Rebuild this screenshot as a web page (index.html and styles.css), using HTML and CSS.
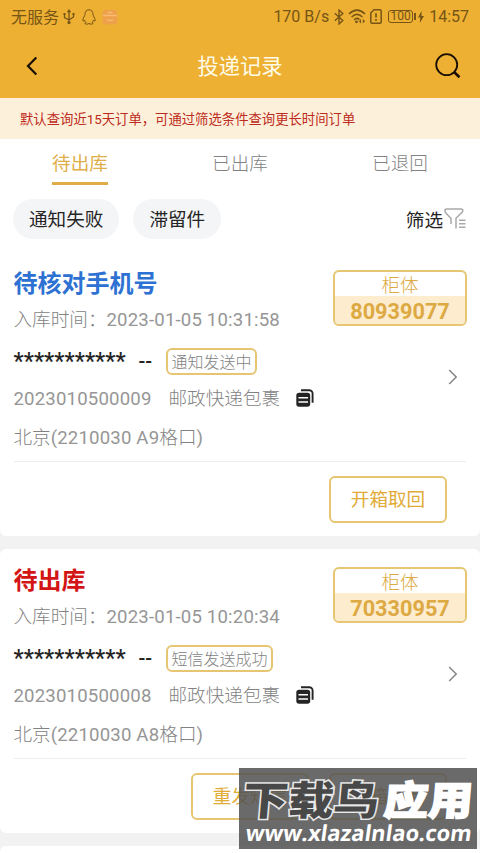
FILE: index.html
```html
<!DOCTYPE html>
<html lang="zh-CN">
<head>
<meta charset="utf-8">
<title>投递记录</title>
<link rel="stylesheet" href="styles.css">
</head>
<body>
<svg width="0" height="0" class="defs">
  <symbol id="copy" viewBox="0 0 18 18">
    <path d="M5 1.2h8.2a3.4 3.4 0 0 1 3.4 3.4v9.2" fill="none" stroke="#252525" stroke-width="1.9"/>
    <rect x="0.3" y="3.8" width="13.9" height="14" rx="2.8" fill="#252525"/>
    <path d="M2.500 8.700h9.500M2.500 13h9.500" stroke="#fff" stroke-width="1.600"/>
  </symbol>
  <symbol id="arrow" viewBox="0 0 10 16">
    <path d="M1.200 1l7 7-7 7" fill="none" stroke="#858585" stroke-width="1.500"/>
  </symbol>
</svg>
<div class="app">
  <header class="header">
    <div class="status">
      <div class="status-left">
        <span>无服务</span>
        <svg class="usb" width="12" height="16" viewBox="0 0 12 16" fill="none" stroke="#765516" stroke-width="1.300"><path d="M6 2v11M1.500 5v3.500L6 11l4.500-3V5"/><path d="M6 0l2.200 3.200H3.800zM0.500 4h2v2h-2zM9.500 4h2v2h-2z" fill="#765516" stroke="none"/><circle cx="6" cy="13.600" r="1.600" fill="#765516" stroke="none"/></svg>
        <svg class="qq" width="14" height="16" viewBox="0 0 14 16" fill="none" stroke="#765516" stroke-width="1"><path d="M7 .8C4.300.8 3 2.700 3 5.200c0 1.700-2.200 3.900-2.200 6.200 0 1.200.8.900 1.700-.3.300 1 .9 1.900 1.600 2.400-1.700.4-1.400 1.700.4 1.700 1.200 0 2-.3 2.500-.8.500.5 1.300.8 2.500.8 1.800 0 2.100-1.300.4-1.700.7-.5 1.300-1.400 1.600-2.400.9 1.200 1.700 1.500 1.700.3C13.200 9.100 11 6.900 11 5.200 11 2.700 9.700.8 7 .8z"/></svg>
        <svg class="box" width="16" height="16" viewBox="0 0 16 16"><rect x=".5" y="1" width="15" height="14.500" rx="3.500" fill="#efa04a"/><path d="M1 6.500h14M5.500 3.500h5M5 10.500q3 2.200 6 0" stroke="#f5bd72" fill="none" stroke-width="1.300"/></svg>
      </div>
      <div class="status-right">
        <span>170 B/s</span>
        <svg class="bt" width="10" height="16" viewBox="0 0 10 16" fill="none" stroke="#765516" stroke-width="1.400"><path d="M.8 4.200l8 7.400L5 15V1l3.800 3.400-8 7.400"/></svg>
        <svg class="wifi" width="18" height="15" viewBox="0 0 18 15" fill="none" stroke="#765516" stroke-width="1.600"><path d="M1 5Q9-2.800 17 5M3.600 8Q9 2.800 14.400 8M6.200 10.800Q9 8.200 11.400 10.600"/><circle cx="8.500" cy="12.800" r="1.400" fill="#765516" stroke="none"/><path d="M13 9.800v4.800l-2-2zM14.800 9.800v4.800l2.200-2.400z" fill="#765516" stroke="none"/></svg>
        <svg class="sim" width="12" height="15" viewBox="0 0 12 15" fill="none" stroke="#765516" stroke-width="1.500"><path d="M4 .8h6q1.200 0 1.200 1.200v11q0 1.200-1.200 1.200H2Q.8 14.200.8 13V4z"/><path d="M6 4.200v4.200M6 10v1.700" stroke-width="1.700"/></svg>
        <span class="battery">100</span>
        <svg class="bolt" width="6" height="12" viewBox="0 0 6 12"><path d="M3.500 0L0 6.500h2.300L1.800 12 6 5H3.600z" fill="#765516"/></svg>
        <span>14:57</span>
      </div>
    </div>
    <div class="nav">
      <svg width="12" height="20" viewBox="0 0 12 20"><path d="M10.300 1.500L2 10l8.300 8.500" fill="none" stroke="#180f02" stroke-width="2.200"/></svg>
      <h1>投递记录</h1>
      <svg width="26" height="26" viewBox="0 0 26 26" fill="none" stroke="#180f02"><circle cx="11.700" cy="11.700" r="10.500" stroke-width="1.800"/><path d="M18.800 18.800l5.700 5.500" stroke-width="2.600"/></svg>
    </div>
  </header>
  <div class="notice">默认查询近15天订单，可通过筛选条件查询更长时间订单</div>
  <nav class="tabs">
    <span class="tab active">待出库</span><span class="tab">已出库</span><span class="tab">已退回</span>
  </nav>
  <div class="filters">
    <span class="chip">通知失败</span><span class="chip">滞留件</span>
    <span class="filter">筛选</span>
    <svg width="22" height="21" viewBox="0 0 22 21" fill="none" stroke="#a9a9a9" stroke-width="1.500"><path d="M7 16v-5.500L1.500 4.500Q-.2 1.200 2.500 1h14.800q2.500.3 1 3L12 10.300V20.500M15 12.200h6.500M15 15.800h6.500M15 19.300h6.500"/></svg>
  </div>

  <main class="list">
    <section class="card first">
      <div class="cabinet"><span>柜体</span><b>80939077</b></div>
      <h2 class="blue">待核对手机号</h2>
      <p class="date">入库时间：<span class="latin">2023-01-05 10:31:58</span></p>
      <div class="phone"><b class="stars">***********</b><b class="dash">--</b><span class="tag">通知发送中</span></div>
      <div class="parcel"><span class="number latin">2023010500009</span><span class="carrier">邮政快递包裹</span><svg width="18" height="18"><use href="#copy"/></svg></div>
      <p class="address">北京<span class="latin">(2210030 A9</span>格口<span class="latin">)</span></p>
      <svg class="arrow" width="10" height="16"><use href="#arrow"/></svg>
      <div class="actions"><button>开箱取回</button></div>
    </section>
    <section class="card">
      <div class="cabinet"><span>柜体</span><b>70330957</b></div>
      <h2 class="red">待出库</h2>
      <p class="date">入库时间：<span class="latin">2023-01-05 10:20:34</span></p>
      <div class="phone"><b class="stars">***********</b><b class="dash">--</b><span class="tag">短信发送成功</span></div>
      <div class="parcel"><span class="number latin">2023010500008</span><span class="carrier">邮政快递包裹</span><svg width="18" height="18"><use href="#copy"/></svg></div>
      <p class="address">北京<span class="latin">(2210030 A8</span>格口<span class="latin">)</span></p>
      <svg class="arrow" width="10" height="16"><use href="#arrow"/></svg>
      <div class="actions"><button>重发短信</button><button>开箱取回</button></div>
    </section>
    <section class="card"></section>
  </main>

  <svg class="watermark" width="238" height="81" viewBox="0 0 238 81">
    <g class="brand" transform="skewX(-5)">
      <text class="dark" x="7" y="47.500" textLength="136" lengthAdjust="spacingAndGlyphs">下载鸟</text>
      <text class="light" x="148" y="47.500" textLength="89" lengthAdjust="spacingAndGlyphs">应用</text>
    </g>
    <g transform="skewX(-8)"><text class="url" x="16" y="73" textLength="226" lengthAdjust="spacingAndGlyphs">www.xlazalnlao.com</text></g>
  </svg>
</div>
</body>
</html>
```
FILE: styles.css
```css
* { box-sizing: border-box; }
body { margin: 0; }
.defs { position: absolute; }
h1, h2, p { margin: 0; }
svg { display: block; flex: none; }
.app {
  position: relative;
  width: 480px;
  height: 853px;
  overflow: hidden;
  background: #fff;
  color: #828282;
  font-family: Roboto, "Noto Sans CJK SC", sans-serif;
  font-size: 18.6px;
  font-weight: 300;
  white-space: nowrap;
}
.latin { color: #969696; font-weight: 400; letter-spacing: .17px; }
.header { height: 98px; background: #edb033; }
.status {
  display: flex;
  justify-content: space-between;
  height: 33px;
  padding: 0 11px;
  color: #765516;
  font-size: 16px;
  font-weight: 400;
}
.status-left, .status-right { display: flex; align-items: center; }
.status-left span { margin-top: -1px; }
.usb { margin-left: 4px; }
.qq { margin-left: 7px; }
.box { margin-left: 6px; }
.bt { margin-left: 5px; }
.wifi { margin-left: 4px; }
.sim { margin-left: 4px; }
.battery {
  position: relative;
  width: 25px;
  height: 13px;
  margin-left: 6px;
  border: 1px solid #765516;
  border-radius: 3px;
  font-size: 12px;
  line-height: 11.5px;
  text-align: center;
}
.battery::after {
  content: "";
  position: absolute;
  left: 25px;
  top: 2px;
  width: 1.5px;
  height: 7px;
  background: #765516;
}
.bolt { margin: 0 5px 0 5px; }
.nav {
  display: flex;
  align-items: center;
  justify-content: space-between;
  height: 65px;
  padding: 0 19px 0 26px;
}
.nav h1 { margin-top: -2px; margin-left: 7px; color: #fffbe6; font-size: 21.3px; font-weight: 400; }
.notice {
  height: 41px;
  padding-left: 20px;
  background: #fdf0da;
  color: #bd2a20;
  font-size: 13.35px;
  font-weight: 400;
  line-height: 43px;
}
.tabs { display: flex; height: 47px; }
.tab { flex: 1; line-height: 51px; text-align: center; }
.tab.active { color: #e0ae49; font-weight: 400; }
.tab.active::after {
  content: "";
  display: block;
  width: 56px;
  height: 3px;
  margin: -8px auto 0;
  background: #e0ae49;
}
.filters { display: flex; align-items: center; height: 66px; padding: 0 14px 0 13px; color: #252525; font-weight: 400; }
.chip {
  height: 40px;
  margin-right: 14px;
  padding: 0 16px;
  border-radius: 20px;
  background: #f4f5f7;
  line-height: 43px;
}
.filter { margin-left: auto; margin-top: -2px; }
.filters svg { margin-left: 1px; margin-top: -1px; }
.list { display: flex; flex-direction: column; gap: 13px; background: #f2f2f2; }
.card {
  position: relative;
  height: 284px;
  padding: 14px 14px 0 13.5px;
  border-radius: 6px;
  background: #fff;
}
.first { border-radius: 0 0 6px 6px; }
.cabinet {
  position: absolute;
  top: 18px;
  right: 13px;
  width: 134px;
  height: 56px;
  overflow: hidden;
  border: 2px solid #e6c573;
  border-radius: 6px;
  color: #dda943;
  text-align: center;
}
.cabinet span { display: block; height: 24px; line-height: 28px; }
.cabinet b { display: block; height: 28px; background: #fdecce; font-size: 21.7px; font-weight: 700; line-height: 31px; }
h2 { height: 34px; font-size: 24px; font-weight: 700; line-height: 36px; }
.blue { color: #2d71d2; }
.red { color: #d31515; }
.date { height: 39px; line-height: 41px; }
.phone { display: flex; align-items: center; height: 44px; color: #252525; }
.stars { width: 125px; font-size: 23px; font-weight: 500; line-height: 44px; padding-top: 2px; }
.dash { width: 27.5px; font-size: 20px; font-weight: 500; }
.tag {
  height: 27px;
  padding: 0 3.5px;
  border: 2px solid #e6c573;
  border-radius: 6px;
  color: #828282;
  font-size: 16px;
  line-height: 25px;
}
.parcel { display: flex; align-items: center; height: 30px; line-height: 30px; }
.number { width: 155px; margin-top: 1px; }
.carrier { margin-top: 1px; }
.parcel svg { margin-left: 16px; }
.address { height: 48px; line-height: 50px; }
.arrow { position: absolute; right: 22px; top: 117px; }
.actions {
  display: flex;
  justify-content: flex-end;
  gap: 20px;
  padding: 14px 19px 0 0;
  border-top: 1px solid #eee;
}
button {
  width: 118px;
  height: 47px;
  padding: 0;
  border: 2px solid #e6c573;
  border-radius: 6px;
  background: #fff;
  color: #e2ab37;
  font: 400 18.6px/45px Roboto, "Noto Sans CJK SC", sans-serif;
}
.watermark {
  position: absolute;
  left: 239px;
  top: 768px;
  background: rgba(82, 82, 82, .86);
}
.brand text { font-family: "Noto Sans CJK SC", sans-serif; font-size: 40px; font-weight: 900; paint-order: stroke; }
.dark { fill: #484848; stroke: #e8e8e8; stroke-width: 3px; }
.light { fill: #fff; stroke: #fff; stroke-width: 1.5px; }
.url { fill: #fff; font: 700 22px "Open Sans", sans-serif; }
```
